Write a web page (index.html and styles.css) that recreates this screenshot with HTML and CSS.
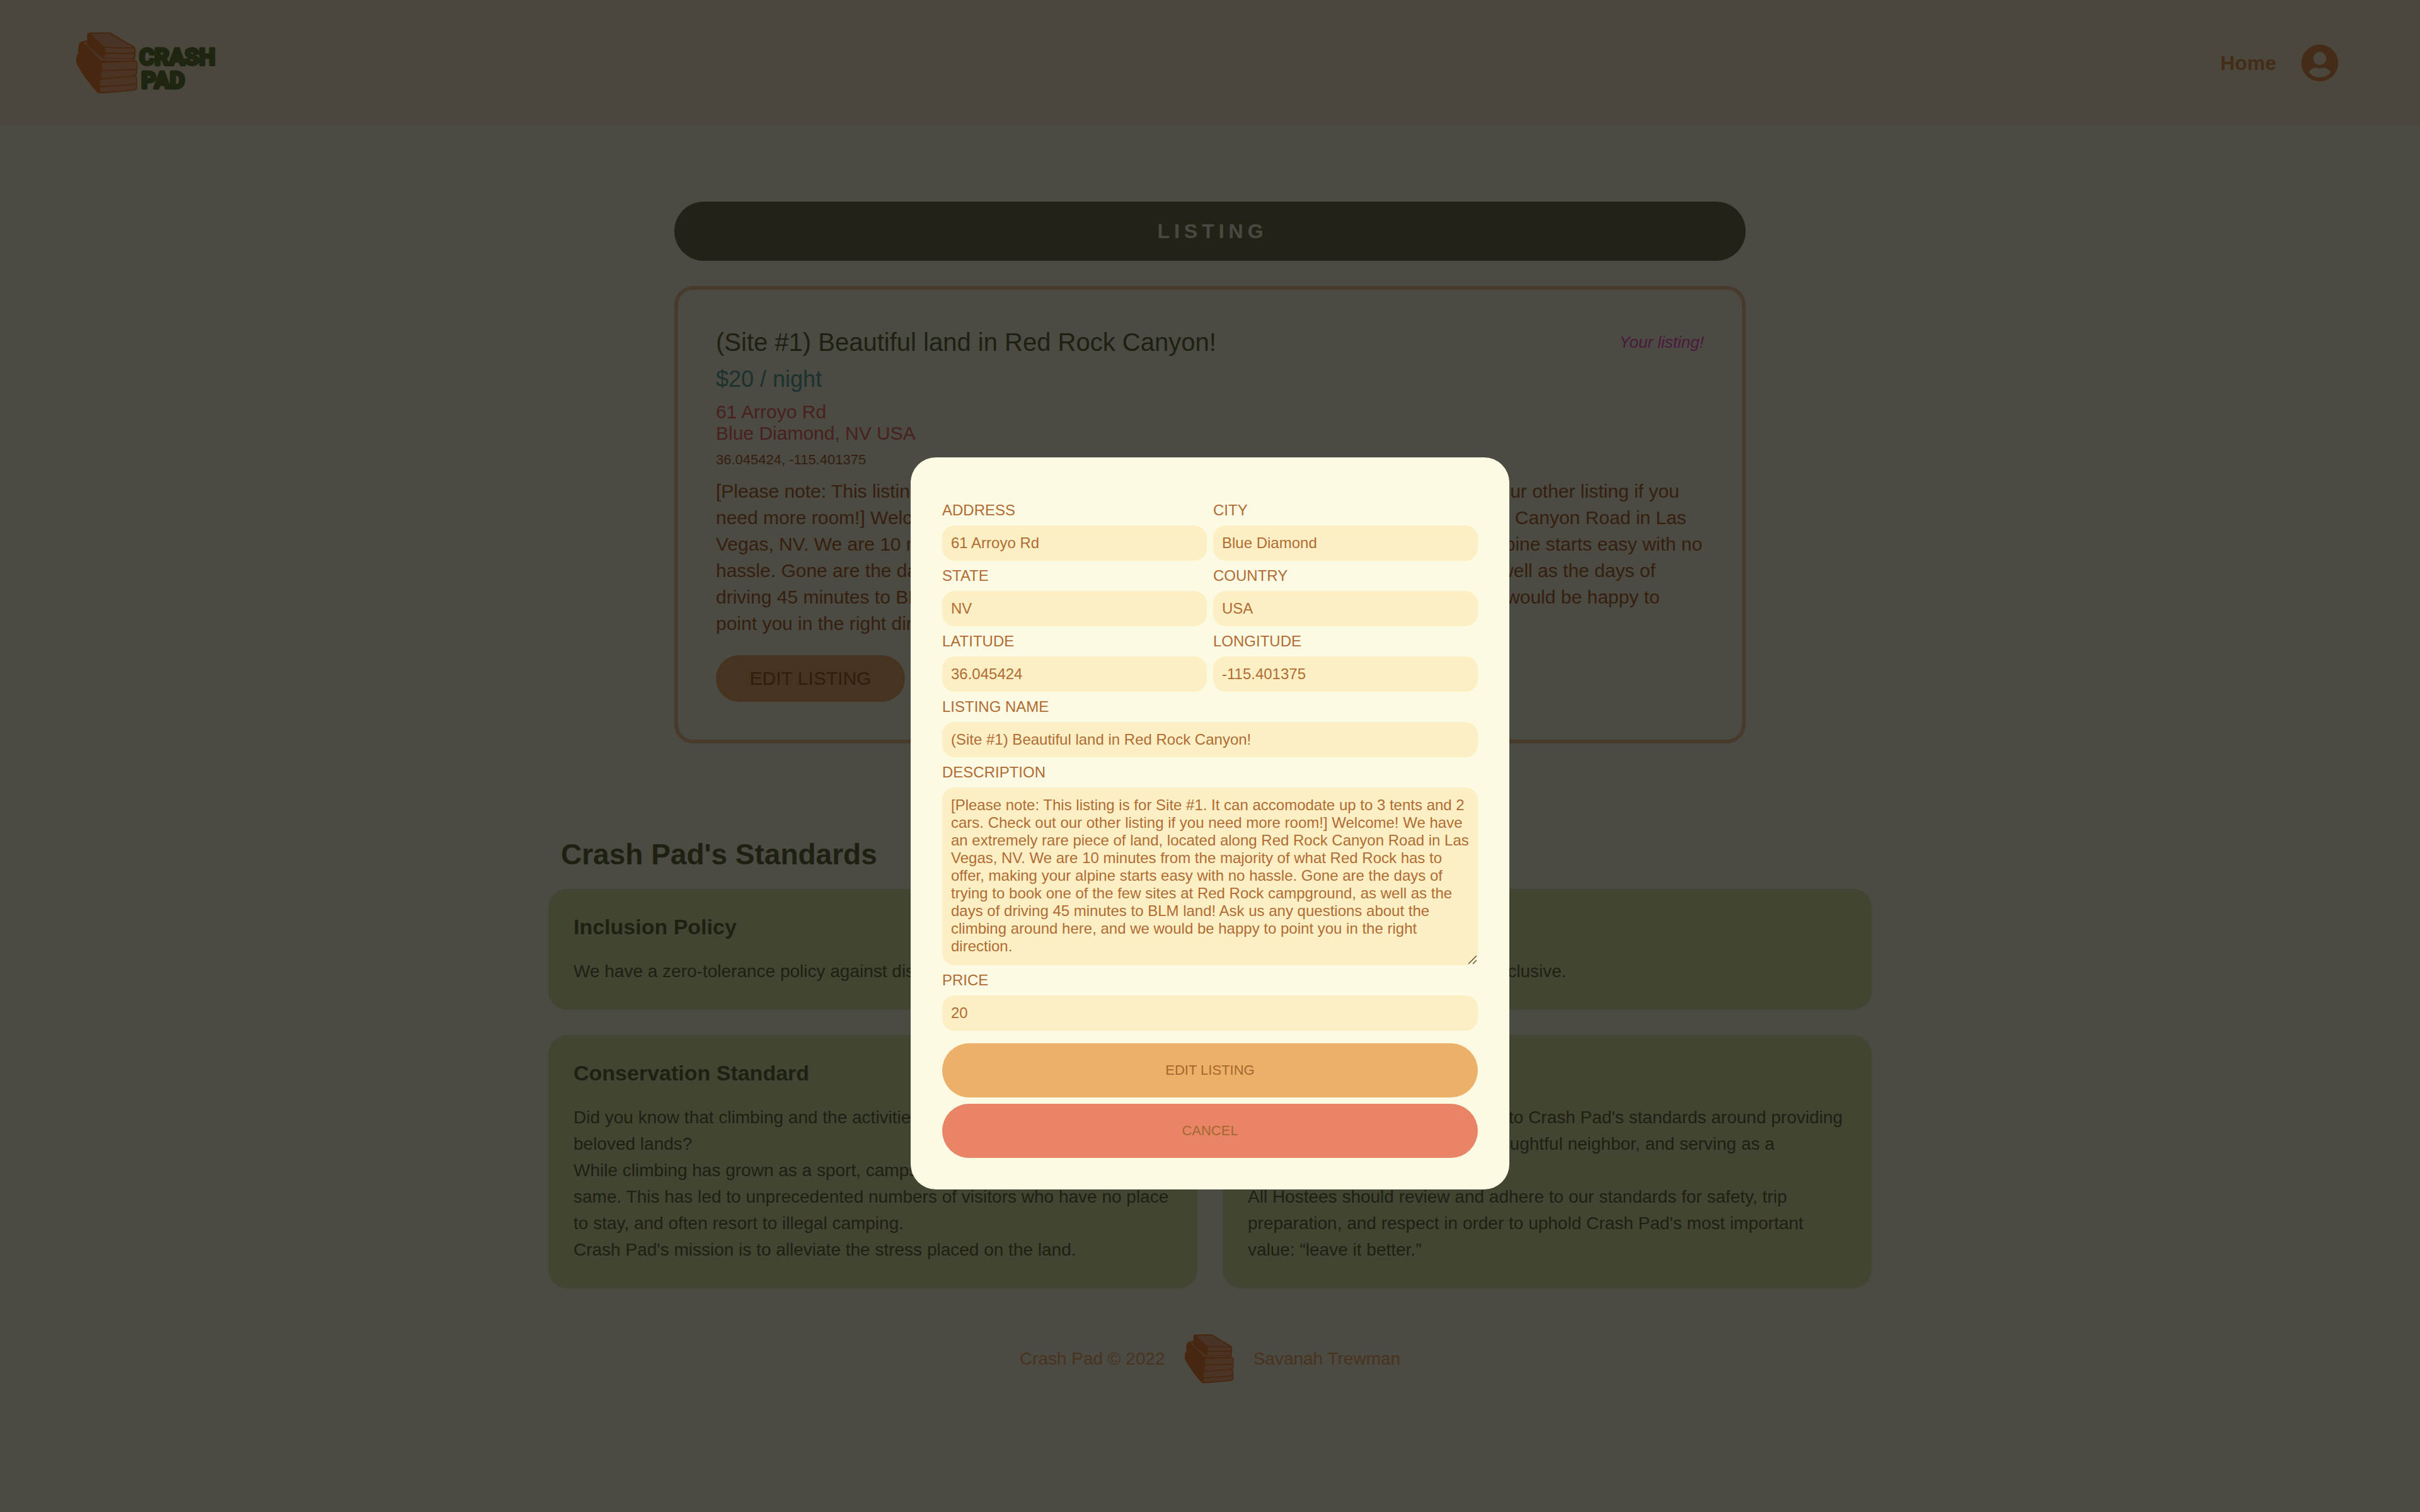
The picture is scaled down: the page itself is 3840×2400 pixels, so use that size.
FILE: index.html
```html
<!DOCTYPE html>
<html lang="en">
<head>
  <meta charset="utf-8">
  <meta name="viewport" content="width=device-width, initial-scale=1">
  <title>Crash Pad</title>
  <link rel="stylesheet" href="styles.css">
</head>
<body>
  <svg class="sprite" aria-hidden="true">
    <symbol id="pads" viewBox="120 90 300 300">
      <path class="pads-edge" d="M176 100Q178 95 190 95L280 94Q290 95 298 101Q345 132 395 158Q406 166 406 178L404 212Q403 219 400 224Q415 230 416 246L413 290Q412 296 407 301Q414 306 414 316L413 358Q410 370 397 372L290 382L237 385Q225 384 217 374Q168 320 125 245Q121 222 125 206Q127 198 134 194Q130 180 136 148Q140 138 174 132Z"/>
      <path class="pads-top" d="M192 102L280 100Q287 101 294 107Q340 138 393 163Q375 168 345 166L264 162Q252 160 246 154Z"/>
      <path class="pads-face" d="M262 168Q330 173 397 170Q401 178 398 190Q330 194 260 190ZM260 197Q330 199 399 197Q398 212 394 218L264 216Q259 217 259 211ZM157 143L172 138L177 160L250 219L388 222L408 228Q330 231 248 228Q240 228 234 222Z"/>
      <path class="pads-face" d="M250 239Q330 238 404 234Q411 238 411 250L410 268Q330 272 244 273L246 246Q247 240 250 239ZM243 280Q330 277 409 274L408 290Q404 298 392 300L250 311Q242 310 240 302ZM244 319Q310 311 398 305Q410 306 410 318L409 336Q330 346 235 349L237 328Q238 320 244 319ZM236 356Q330 350 409 343Q410 362 400 366Q320 376 241 378Q234 376 236 356Z"/>
    </symbol>
  </svg>

  <header class="header">
    <a class="logo" href="#" aria-label="Crash Pad">
      <svg class="logo-art" viewBox="120 90 670 300">
        <use href="#pads" x="120" y="90" width="300" height="300"/>
        <text class="logo-word" x="423" y="250">CRASH</text>
        <text class="logo-word" x="432" y="361">PAD</text>
      </svg>
    </a>
    <nav class="nav">
      <a class="nav-link" href="#">Home</a>
      <button class="account" type="button" aria-label="Account">
        <svg class="account-icon" viewBox="0 0 24 24"><path d="M12 2C6.480 2 2 6.480 2 12s4.480 10 10 10 10-4.480 10-10S17.520 2 12 2zm0 4c1.930 0 3.500 1.570 3.500 3.500S13.930 13 12 13s-3.500-1.570-3.500-3.500S10.070 6 12 6zm0 13.800c-2.300 0-4.500-.9-5.900-2.700C7 15.300 8.500 14.600 10 14.600c.7 0 1.200.4 2 .4s1.300-.4 2-.4c1.500 0 3 .7 3.900 2.500-1.400 1.800-3.600 2.700-5.900 2.700z"/></svg>
      </button>
    </nav>
  </header>

  <main class="main">
    <section class="listing">
      <h1 class="banner">LISTING</h1>
      <article class="listing-card">
        <div class="listing-head">
          <h2 class="listing-title">(Site #1) Beautiful land in Red Rock Canyon!</h2>
          <em class="listing-owner">Your listing!</em>
        </div>
        <p class="listing-price">$20 / night</p>
        <address class="listing-address">61 Arroyo Rd<br>Blue Diamond, NV USA</address>
        <p class="listing-coords">36.045424, -115.401375</p>
        <p class="listing-text">[Please note: This listing is for Site #1. It can accomodate up to 3 tents and 2 cars. Check out our other listing if you need more room!] Welcome! We have an extremely rare piece of land, located along Red Rock Canyon Road in Las Vegas, NV. We are 10 minutes from the majority of what Red Rock has to offer, making your alpine starts easy with no hassle. Gone are the days of trying to book one of the few sites at Red Rock campground, as well as the days of driving 45 minutes to BLM land! Ask us any questions about the climbing around here, and we would be happy to point you in the right direction.</p>
        <button class="listing-edit" type="button">EDIT LISTING</button>
      </article>
    </section>

    <section class="standards">
      <h2 class="standards-title">Crash Pad's Standards</h2>
      <div class="standards-grid">
        <article class="standard standard-wide">
          <h3 class="standard-title">Inclusion Policy</h3>
          <p>We have a zero-tolerance policy against discrimination of any kind. We want Hosts and Hostees to be welcoming and inclusive.</p>
        </article>
        <article class="standard">
          <h3 class="standard-title">Conservation Standard</h3>
          <p>Did you know that climbing and the activities surrounding it can harm our<br>beloved lands?</p>
          <p>While climbing has grown as a sport, campsites have largely stayed the<br>same. This has led to unprecedented numbers of visitors who have no place<br>to stay, and often resort to illegal camping.</p>
          <p>Crash Pad's mission is to alleviate the stress placed on the land.</p>
        </article>
        <article class="standard">
          <h3 class="standard-title">Host Standard</h3>
          <p>All Hosts are expected to adhere to Crash Pad's standards around providing<br>safe clean campsites, being a thoughtful neighbor, and serving as a<br>steward of the land.</p>
          <p>All Hostees should review and adhere to our standards for safety, trip<br>preparation, and respect in order to uphold Crash Pad's most important<br>value: “leave it better.”</p>
        </article>
      </div>
    </section>
  </main>

  <footer class="footer">
    <span>Crash Pad © 2022</span>
    <svg class="footer-art" viewBox="0 0 80 80" aria-hidden="true"><use href="#pads" width="80" height="80"/></svg>
    <a class="footer-link" href="#">Savanah Trewman</a>
  </footer>

  <div class="overlay">
    <form class="modal" role="dialog" aria-label="Edit listing">
      <div class="field">
        <label for="address">ADDRESS</label>
        <input id="address" type="text" value="61 Arroyo Rd">
      </div>
      <div class="field">
        <label for="city">CITY</label>
        <input id="city" type="text" value="Blue Diamond">
      </div>
      <div class="field">
        <label for="state">STATE</label>
        <input id="state" type="text" value="NV">
      </div>
      <div class="field">
        <label for="country">COUNTRY</label>
        <input id="country" type="text" value="USA">
      </div>
      <div class="field">
        <label for="latitude">LATITUDE</label>
        <input id="latitude" type="text" value="36.045424">
      </div>
      <div class="field">
        <label for="longitude">LONGITUDE</label>
        <input id="longitude" type="text" value="-115.401375">
      </div>
      <div class="field field-wide">
        <label for="name">LISTING NAME</label>
        <input id="name" type="text" value="(Site #1) Beautiful land in Red Rock Canyon!">
      </div>
      <div class="field field-wide">
        <label for="description">DESCRIPTION</label>
        <textarea id="description" rows="9">[Please note: This listing is for Site #1. It can accomodate up to 3 tents and 2 cars. Check out our other listing if you need more room!] Welcome! We have an extremely rare piece of land, located along Red Rock Canyon Road in Las Vegas, NV. We are 10 minutes from the majority of what Red Rock has to offer, making your alpine starts easy with no hassle. Gone are the days of trying to book one of the few sites at Red Rock campground, as well as the days of driving 45 minutes to BLM land! Ask us any questions about the climbing around here, and we would be happy to point you in the right direction.</textarea>
      </div>
      <div class="field field-wide">
        <label for="price">PRICE</label>
        <input id="price" type="text" value="20">
      </div>
      <div class="actions">
        <button class="action action-save" type="submit">EDIT LISTING</button>
        <button class="action action-cancel" type="button">CANCEL</button>
      </div>
    </form>
  </div>
</body>
</html>
```
FILE: styles.css
```css
:root {
  --cream: #fcfae2;
  --brown: #b06c34;
  --olive: #666b3d;
}

*,
*::before,
*::after {
  box-sizing: border-box;
}

body {
  margin: 0;
  background: #fbf8df;
  color: var(--olive);
  font-family: "Liberation Sans", Arial, Helvetica, sans-serif;
  font-size: 28px;
}

h1,
h2,
h3,
p {
  margin: 0;
}

a {
  color: inherit;
  text-decoration: none;
}

button {
  border: 0;
  font-family: inherit;
  cursor: pointer;
}

.sprite {
  position: absolute;
  width: 0;
  height: 0;
}

.pads-edge {
  fill: #ee8238;
}

.pads-top {
  fill: #f0aa80;
}

.pads-face {
  fill: #fab07a;
}

/* Header */

.header {
  display: flex;
  align-items: center;
  justify-content: space-between;
  padding: 50px 124px 50px 120px;
  background: #fdedc9;
}

.logo-art {
  display: block;
  height: 100px;
}

.logo-word {
  fill: #67803a;
  stroke: #67803a;
  stroke-width: 13px;
  stroke-linejoin: round;
  font-family: Roboto, "Liberation Sans", sans-serif;
  font-size: 110px;
  font-weight: 700;
}

.nav {
  display: flex;
  align-items: center;
  gap: 34px;
  color: #e39550;
}

.nav-link {
  font-size: 32px;
  font-weight: 700;
}

.account {
  padding: 0;
  background: none;
  color: inherit;
}

.account-icon {
  display: block;
  width: 70px;
  height: 70px;
  fill: currentColor;
}

/* Listing */

.main {
  display: flex;
  flex-direction: column;
  align-items: center;
  gap: 149px;
  padding-top: 120px;
}

.listing {
  display: flex;
  flex-direction: column;
  gap: 40px;
  width: 100%;
  max-width: 1700px;
}

.banner {
  padding: 28px 0 28px 8px;
  border-radius: 48px;
  background: #74774a;
  color: #f4f1dc;
  font-size: 32px;
  line-height: 38px;
  letter-spacing: 7px;
  text-align: center;
}

.listing-card {
  padding: 60px;
  border: 6px solid #f0c193;
  border-radius: 30px;
  color: #b36a34;
}

.listing-head {
  display: flex;
  align-items: center;
  justify-content: space-between;
  margin-bottom: 15px;
}

.listing-title {
  color: var(--olive);
  font-size: 40px;
  font-weight: 400;
  line-height: 46px;
}

.listing-owner {
  color: #fa55cc;
  font-size: 26px;
}

.listing-price {
  margin-bottom: 14px;
  color: #5aa79b;
  font-size: 36px;
  line-height: 42px;
}

.listing-address {
  margin-bottom: 12px;
  color: #f06e66;
  font-size: 30px;
  font-style: normal;
  line-height: 34px;
}

.listing-coords {
  margin-bottom: 16px;
  font-size: 22px;
  line-height: 26px;
}

.listing-text {
  margin-bottom: 29px;
  font-size: 30px;
  line-height: 42px;
}

.listing-edit {
  display: block;
  width: 300px;
  padding: 20px;
  border-radius: 38px;
  background: #eaac6b;
  color: #9d6735;
  font-size: 30px;
  line-height: 34px;
}

/* Standards */

.standards {
  width: 100%;
  max-width: 2100px;
}

.standards-title {
  margin-bottom: 28px;
  padding-left: 20px;
  font-size: 46px;
  line-height: 54px;
}

.standards-grid {
  display: grid;
  grid-template-columns: 1fr 1fr;
  gap: 40px;
}

.standard {
  padding: 40px;
  border-radius: 30px;
  background: #dfe6ab;
  line-height: 42px;
}

.standard-wide {
  grid-column: 1 / -1;
}

.standard-title {
  margin-bottom: 30px;
  font-size: 34px;
  line-height: 40px;
}

/* Footer */

.footer {
  display: flex;
  align-items: center;
  justify-content: center;
  gap: 30px;
  padding: 72px 0;
  color: #f4ac6c;
}

.footer-art {
  width: 80px;
  height: 80px;
}

/* Edit dialog */

.overlay {
  position: fixed;
  inset: 0;
  display: flex;
  align-items: flex-start;
  justify-content: center;
  padding-top: 726px;
  background: rgba(0, 0, 0, 0.7);
}

.modal {
  display: grid;
  grid-template-columns: 1fr 1fr;
  gap: 10px;
  width: 100%;
  max-width: 950px;
  padding: 70px 50px 50px;
  border-radius: 40px;
  background: var(--cream);
  color: var(--brown);
}

.field {
  display: flex;
  flex-direction: column;
  gap: 10px;
  font-size: 24px;
  line-height: 28px;
}

.field-wide,
.actions {
  grid-column: 1 / -1;
}

.field input,
.field textarea {
  display: block;
  width: 100%;
  padding: 14px;
  border: 0;
  border-radius: 20px;
  background: #fdefc4;
  color: inherit;
  font: inherit;
}

.field textarea {
  min-height: 282px;
  resize: both;
}

.field textarea::-webkit-resizer {
  background: url("data:image/svg+xml,%3Csvg xmlns='http://www.w3.org/2000/svg' viewBox='0 0 15 15'%3E%3Cpath d='M0 13L13 0M7 13L13 7' stroke='%235b5642' stroke-width='1.500'/%3E%3C/svg%3E") no-repeat;
}

.actions {
  display: flex;
  flex-direction: column;
  gap: 10px;
  padding-top: 10px;
}

.action {
  padding: 30px;
  border-radius: 43px;
  color: #a4682f;
  font-size: 22px;
  line-height: 26px;
}

.action-save {
  background: #edb069;
}

.action-cancel {
  background: #e98566;
}
```
